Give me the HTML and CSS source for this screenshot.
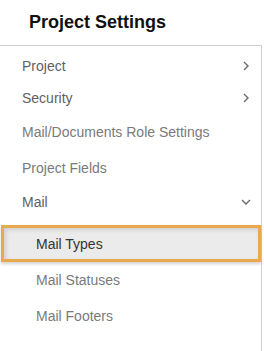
FILE: index.html
```html
<!DOCTYPE html>
<html>
<head>
<meta charset="utf-8">
<link rel="stylesheet" href="styles.css">
</head>
<body>
<div class="title">Project Settings</div>
<nav class="panel">
  <div class="row parent r32">
    <span>Project</span>
    <svg class="chev-r" width="8" height="10" viewBox="0 0 8 10"><path d="M2 1 L6 5 L2 9" fill="none" stroke="#6a6a6a" stroke-width="1.4"/></svg>
  </div>
  <div class="row parent r32">
    <span>Security</span>
    <svg class="chev-r" width="8" height="10" viewBox="0 0 8 10"><path d="M2 1 L6 5 L2 9" fill="none" stroke="#6a6a6a" stroke-width="1.4"/></svg>
  </div>
  <div class="row leaf r36">Mail/Documents Role Settings</div>
  <div class="row leaf r36">Project Fields</div>
  <div class="row parent r32">
    <span>Mail</span>
    <svg class="chev-d" width="10" height="8" viewBox="0 0 10 8"><path d="M1 2 L5 6 L9 2" fill="none" stroke="#6a6a6a" stroke-width="1.4"/></svg>
  </div>
  <div class="row sub active">Mail Types</div>
  <div class="row sub r36">Mail Statuses</div>
  <div class="row sub r36">Mail Footers</div>
</nav>
</body>
</html>
```

FILE: styles.css
```css
html, body {
  margin: 0;
  padding: 0;
  background: #fff;
  font-family: "Liberation Sans", Arial, sans-serif;
}
.title {
  height: 45px;
  line-height: 45px;
  padding-left: 29px;
  font-size: 18px;
  font-weight: bold;
  color: #111;
}
.panel {
  width: 262px;
  height: 306px;
  border-top: 1px solid #cfcfcf;
  border-right: 1px solid #cfcfcf;
  padding-top: 4px;
  display: flex;
  flex-direction: column;
  box-sizing: border-box;
  font-size: 14px;
}
.row {
  display: flex;
  align-items: center;
  justify-content: space-between;
  padding-left: 22px;
  flex: none;
}
.r32 { height: 32px; }
.r36 { height: 36px; }
.parent { color: #5f5f5f; }
.leaf { color: #7a7a7a; }
.sub {
  color: #7a7a7a;
  padding-left: 36px;
}
.chev-r { margin-right: 11px; }
.chev-d { margin-right: 10px; }
.sub.active {
  margin-top: 7px;
  margin-left: 1px;
  height: 37px;
  box-sizing: border-box;
  border: 3px solid #e9a94f;
  background: #ebebeb;
  color: #333;
  padding-left: 32px;
  box-shadow: inset 2px 2px 4px rgba(0,0,0,0.12), 0 2px 3px rgba(0,0,0,0.18);
}
```
